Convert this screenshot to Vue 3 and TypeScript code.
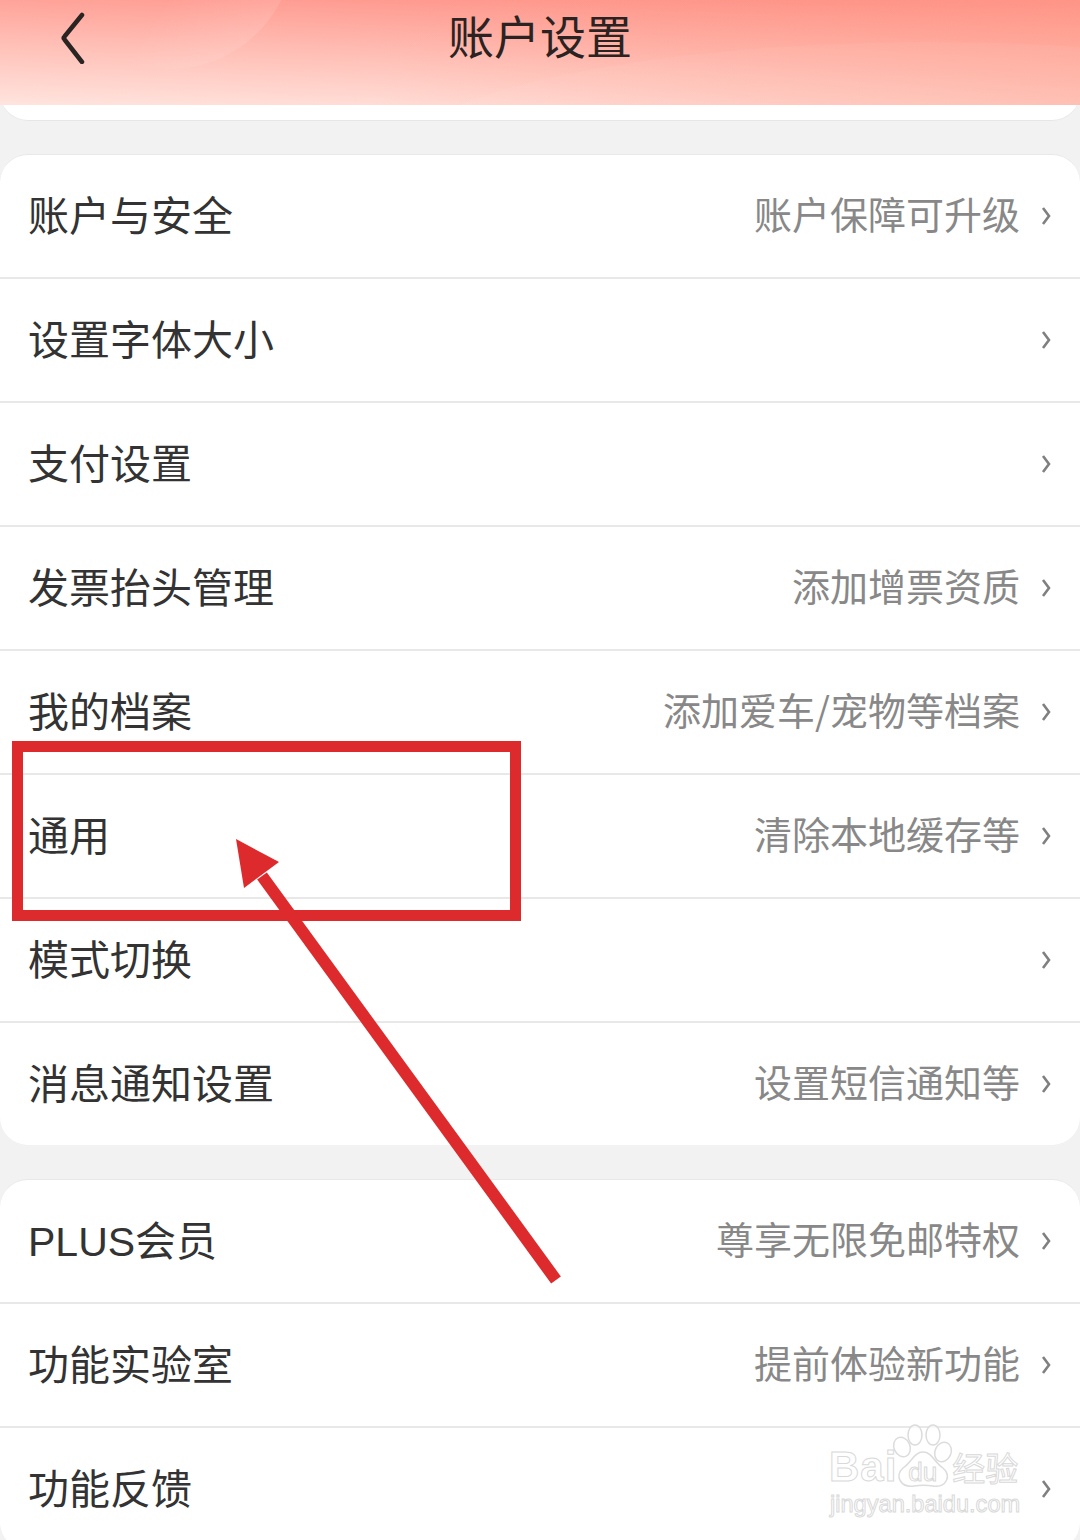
<template>
  <div class="page">
    <header class="nav">
      <div class="nav-arc"></div>
      <div class="nav-sweep"></div>
      <div class="nav-wave"></div>
      <button class="back" aria-label="返回">
        <svg width="26" height="52" viewBox="0 0 26 52">
          <path d="M23 3 L5.5 24.5 Q4 26 5.5 27.5 L23 50" />
        </svg>
      </button>
      <h1 class="title">账户设置</h1>
    </header>
    <div class="top-card"></div>

    <section v-for="(group, i) in groups" :key="i" class="card">
      <div v-for="row in group" :key="row.label" class="row">
        <span class="label">{{ row.label }}</span>
        <span v-if="row.hint" class="hint">{{ row.hint }}</span>
        <svg class="chev" width="10" height="20" viewBox="0 0 10 20">
          <path d="M2 2 L8 10 L2 18" />
        </svg>
      </div>
    </section>

    <!-- 标注: 红框和箭头 -->
    <svg class="mark" width="1080" height="1540" viewBox="0 0 1080 1540">
      <rect x="17.5" y="746.5" width="498" height="169" fill="none" stroke="#dd2a2c" stroke-width="11" />
      <line x1="556" y1="1280" x2="262" y2="876" stroke="#dd2a2c" stroke-width="12" />
      <polygon points="236,839 279,862 244,888" fill="#dd2a2c" />
    </svg>

    <!-- 水印 -->
    <div class="wm">
      <svg class="paw" width="68" height="66" viewBox="0 0 68 66">
        <g fill="rgba(255,255,255,.7)" stroke="#dcdcdc" stroke-width="1.5">
          <ellipse cx="11" cy="23" rx="8" ry="10" transform="rotate(-25 11 23)" />
          <ellipse cx="24" cy="11" rx="7" ry="10" />
          <ellipse cx="42" cy="11" rx="7" ry="10" />
          <ellipse cx="52" cy="28" rx="8" ry="10" transform="rotate(25 52 28)" />
          <path d="M32 28 C23 28 21 38 12 44 C3 52 10 64 23 62 C29 61 36 61 42 62 C55 64 61 52 52 44 C43 38 41 28 32 28 Z" />
        </g>
      </svg>
      <div class="wm-top">
        <span class="wm-bai">Bai</span><span class="wm-du">du</span><span class="wm-cn">经验</span>
      </div>
      <div class="wm-url">jingyan.baidu.com</div>
    </div>
  </div>
</template>

<script setup lang="ts">
interface Row {
  label: string
  hint?: string
}

const groups: Row[][] = [
  [
    { label: '账户与安全', hint: '账户保障可升级' },
    { label: '设置字体大小' },
    { label: '支付设置' },
    { label: '发票抬头管理', hint: '添加增票资质' },
    { label: '我的档案', hint: '添加爱车/宠物等档案' },
    { label: '通用', hint: '清除本地缓存等' },
    { label: '模式切换' },
    { label: '消息通知设置', hint: '设置短信通知等' }
  ],
  [
    { label: 'PLUS会员', hint: '尊享无限免邮特权' },
    { label: '功能实验室', hint: '提前体验新功能' },
    { label: '功能反馈' }
  ]
]
</script>

<style>
html,
body {
  margin: 0;
  background: #f2f2f2;
}
</style>

<style scoped>
.page {
  position: relative;
  width: 1080px;
  height: 1540px;
  overflow: hidden;
  background: #f2f2f2;
  font-family: "Noto Sans CJK SC", "Liberation Sans", sans-serif;
}

.nav {
  position: relative;
  z-index: 1;
  height: 105px;
  display: flex;
  align-items: center;
  justify-content: center;
  overflow: hidden;
  background: linear-gradient(182deg, #fe8a80 0%, #ffa298 25%, #ffc4bb 62%, #ffe4de 100%);
}

.nav-arc {
  position: absolute;
  left: 46px;
  top: -179px;
  width: 248px;
  height: 248px;
  border-radius: 50%;
  background: linear-gradient(125deg, rgba(255, 255, 255, 0) 58%, rgba(255, 255, 255, 0.16) 100%);
}

.nav-sweep {
  position: absolute;
  inset: 0;
  background: linear-gradient(90deg, rgba(255, 170, 150, 0) 35%, rgba(255, 165, 145, 0.4) 100%);
}

.nav-wave {
  position: absolute;
  left: 380px;
  top: 42px;
  width: 1100px;
  height: 260px;
  border-radius: 50%;
  background: rgba(255, 255, 255, 0.05);
}

.back {
  position: absolute;
  left: 59px;
  top: 12px;
  padding: 0;
  border: 0;
  background: none;
}

.back svg {
  display: block;
  fill: none;
  stroke: #2a2422;
  stroke-width: 4.5;
  stroke-linecap: round;
  stroke-linejoin: round;
}

.title {
  position: relative;
  margin: 0 0 38px;
  font-size: 46px;
  line-height: 48px;
  font-weight: 400;
  color: #2b2322;
}

.top-card {
  height: 46px;
  margin-top: -30px;
  background: #fff;
  border-bottom: 1px solid #e6e6e6;
  border-radius: 0 0 28px 28px;
  box-sizing: border-box;
}

.card {
  margin-top: 33px;
  background: #fff;
  border-top: 1px solid #e8e8e8;
  border-radius: 28px;
  overflow: hidden;
}

.card + .card {
  margin-top: 34px;
}

.row {
  height: 124px;
  box-sizing: border-box;
  display: flex;
  align-items: center;
  padding: 0 29px 0 28px;
  border-bottom: 2px solid #e8e8e8;
}

.row:last-child {
  height: 122px;
  border-bottom: 0;
}

.label {
  margin-top: 2px;
  font-family: "Liberation Sans", "Noto Sans CJK SC", sans-serif;
  font-size: 41px;
  line-height: 48px;
  color: #333;
}

.hint {
  margin-left: auto;
  margin-bottom: 6px;
  font-size: 38px;
  line-height: 48px;
  color: #888;
}

.chev {
  flex: none;
  margin-left: 21px;
  fill: none;
  stroke: #808080;
  stroke-width: 2.6;
}

.row .label + .chev {
  margin-left: auto;
}

.mark {
  position: absolute;
  left: 0;
  top: 0;
  z-index: 2;
  pointer-events: none;
}

.wm {
  position: absolute;
  left: 827px;
  top: 1424px;
  z-index: 3;
  width: 200px;
  height: 95px;
  color: transparent;
  -webkit-text-stroke: 1px #d9d9d9;
  font-family: "Liberation Sans", "Noto Sans CJK SC", sans-serif;
}

.paw {
  position: absolute;
  left: 64px;
  top: 0;
}

.wm-top {
  position: absolute;
  left: 2px;
  top: 19px;
  display: flex;
  align-items: baseline;
  white-space: nowrap;
}

.wm-bai {
  font-size: 42px;
  font-weight: 700;
  letter-spacing: 1px;
}

.wm-du {
  margin-left: 11px;
  font-size: 26px;
}

.wm-cn {
  margin-left: 15px;
  font-size: 33px;
}

.wm-url {
  position: absolute;
  left: 3px;
  top: 67px;
  font-size: 23.6px;
  line-height: 26px;
  white-space: nowrap;
}
</style>
